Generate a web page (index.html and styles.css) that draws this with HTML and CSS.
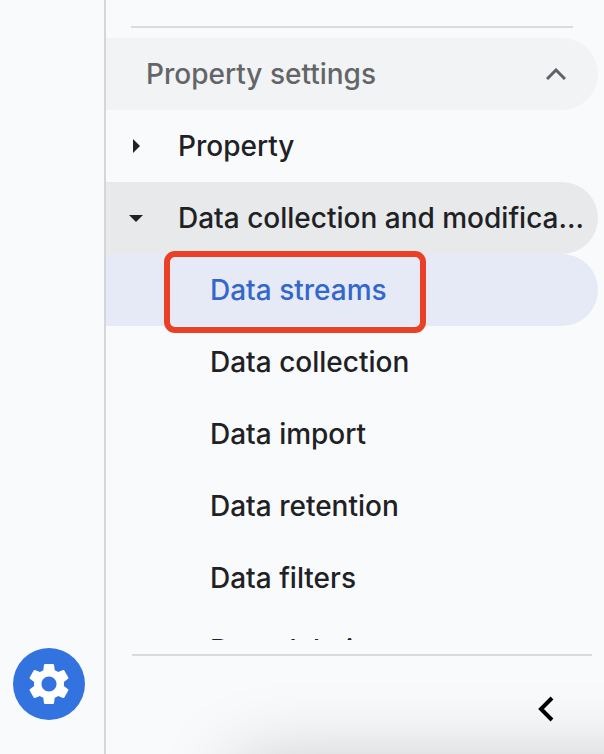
FILE: index.html
```html
<!DOCTYPE html>
<html lang="en">
<head>
<meta charset="utf-8">
<meta name="viewport" content="width=device-width, initial-scale=1">
<title>Admin</title>
<link rel="stylesheet" href="styles.css">
</head>
<body>
<div class="app">
  <aside class="rail">
    <button class="admin" type="button" aria-label="Admin">
      <svg class="gear" viewBox="0 0 24 24" aria-hidden="true"><path d="M19.14 12.94c.04-.3.06-.61.06-.94 0-.32-.02-.64-.07-.94l2.03-1.58c.18-.14.23-.41.12-.61l-1.92-3.32c-.12-.22-.37-.29-.59-.22l-2.39.96c-.5-.38-1.03-.7-1.62-.94L14.4 2.81c-.04-.24-.24-.41-.48-.41h-3.84c-.24 0-.43.17-.47.41l-.36 2.54c-.59.24-1.13.57-1.62.94l-2.39-.96c-.22-.08-.47 0-.59.22L2.74 8.87c-.12.21-.08.47.12.61l2.03 1.58c-.05.3-.09.63-.09.94s.02.64.07.94l-2.03 1.58c-.18.14-.23.41-.12.61l1.92 3.32c.12.22.37.29.59.22l2.39-.96c.5.38 1.03.7 1.62.94l.36 2.54c.05.24.24.41.48.41h3.84c.24 0 .44-.17.47-.41l.36-2.54c.59-.24 1.13-.56 1.62-.94l2.39.96c.22.08.47 0 .59-.22l1.92-3.32c.12-.22.07-.47-.12-.61l-2.01-1.58zM12 15.6c-1.98 0-3.6-1.62-3.6-3.6s1.62-3.6 3.6-3.6 3.6 1.62 3.6 3.6-1.62 3.6-3.6 3.6z"/></svg>
    </button>
  </aside>
  <div class="panel">
    <nav class="menu">
      <hr class="divider">
      <button class="row section" type="button" aria-expanded="true">
        <span class="label">Property settings</span>
        <svg class="chevron" viewBox="0 0 20 12" aria-hidden="true"><path d="M1 11l9-9 9 9"/></svg>
      </button>
      <button class="row group" type="button" aria-expanded="false">
        <svg class="arrow" viewBox="0 0 16 16" aria-hidden="true"><path d="M5 1v14l7-7z"/></svg>
        <span class="label">Property</span>
      </button>
      <button class="row group open" type="button" aria-expanded="true">
        <svg class="arrow" viewBox="0 0 16 16" aria-hidden="true"><path d="M1 5h14l-7 7z"/></svg>
        <span class="label">Data collection and modification</span>
      </button>
      <a class="row item current" href="#streams" aria-current="page">Data streams</a>
      <a class="row item" href="#collection">Data collection</a>
      <a class="row item" href="#import">Data import</a>
      <a class="row item" href="#retention">Data retention</a>
      <a class="row item" href="#filters">Data filters</a>
      <a class="row item" href="#deletion">Data deletion</a>
    </nav>
    <footer class="footer">
      <button class="collapse" type="button" aria-label="Collapse menu">
        <svg class="back" viewBox="0 0 18 28" aria-hidden="true"><path d="M16 3L5 14l11 11"/></svg>
      </button>
    </footer>
  </div>
</div>
</body>
</html>
```
FILE: styles.css
```css
*,
*::after {
  box-sizing: border-box;
}

body {
  margin: 0;
  background: #f9fafc;
  color: #202124;
  font: 500 28px/36px Inter, "Liberation Sans", sans-serif;
}

button {
  border: 0;
  background: none;
  color: inherit;
  font: inherit;
  text-align: left;
  cursor: pointer;
}

.app {
  display: flex;
  height: 100vh;
}

.rail {
  display: flex;
  flex: none;
  flex-direction: column;
  justify-content: flex-end;
  align-items: center;
  width: 106px;
  padding: 0 6px 34px 0;
  border-right: 2px solid #d5d6d8;
}

.admin {
  display: grid;
  place-items: center;
  width: 72px;
  height: 72px;
  padding: 0;
  border-radius: 50%;
  background: #3273e0;
}

.gear {
  width: 50px;
  height: 50px;
  fill: #fff;
}

.panel {
  display: flex;
  flex: 1;
  flex-direction: column;
  min-width: 0;
}

.menu {
  flex: 1;
  min-height: 0;
  padding: 26px 6px 0 0;
  overflow: hidden;
}

.divider {
  height: 2px;
  margin: 0 25px 10px;
  border: 0;
  background: #d9dbde;
}

.row {
  position: relative;
  display: flex;
  align-items: center;
  width: 100%;
  height: 72px;
  padding: 0 14px 0 104px;
  border-radius: 0 36px 36px 0;
  color: inherit;
  text-decoration: none;
}

.section {
  justify-content: space-between;
  padding: 0 32px 0 40px;
  background: #f2f3f5;
  color: #636568;
}

.chevron {
  width: 20px;
  height: 12px;
  fill: none;
  stroke: #5f6368;
  stroke-width: 3;
}

.group {
  gap: 34px;
  padding-left: 22px;
}

.open {
  background: #e8e9eb;
}

.arrow {
  flex: none;
  width: 16px;
  height: 16px;
  fill: #202124;
}

.label {
  overflow: hidden;
  text-overflow: ellipsis;
  white-space: nowrap;
}

.current {
  background: #e5eaf6;
  color: #3367cc;
}

.current::after {
  content: "";
  position: absolute;
  top: -3px;
  left: 58px;
  width: 262px;
  height: 82px;
  border: 6px solid #ea4025;
  border-radius: 11px;
}

.footer {
  position: relative;
  display: flex;
  flex: none;
  justify-content: flex-end;
  height: 114px;
  padding: 14px 12px 0 26px;
  overflow: hidden;
}

/* Soft shadow rising from below the panel */
.footer::after {
  content: "";
  position: absolute;
  top: 124px;
  right: -160px;
  left: 130px;
  height: 200px;
  box-shadow: 0 0 80px rgba(0, 0, 0, 0.22);
  pointer-events: none;
}

.collapse {
  display: flex;
  flex: 1;
  justify-content: flex-end;
  align-items: center;
  padding: 8px 38px 0 0;
  border-top: 2px solid #d9dbde;
}

.back {
  width: 18px;
  height: 28px;
  fill: none;
  stroke: #000;
  stroke-width: 4;
}
```
